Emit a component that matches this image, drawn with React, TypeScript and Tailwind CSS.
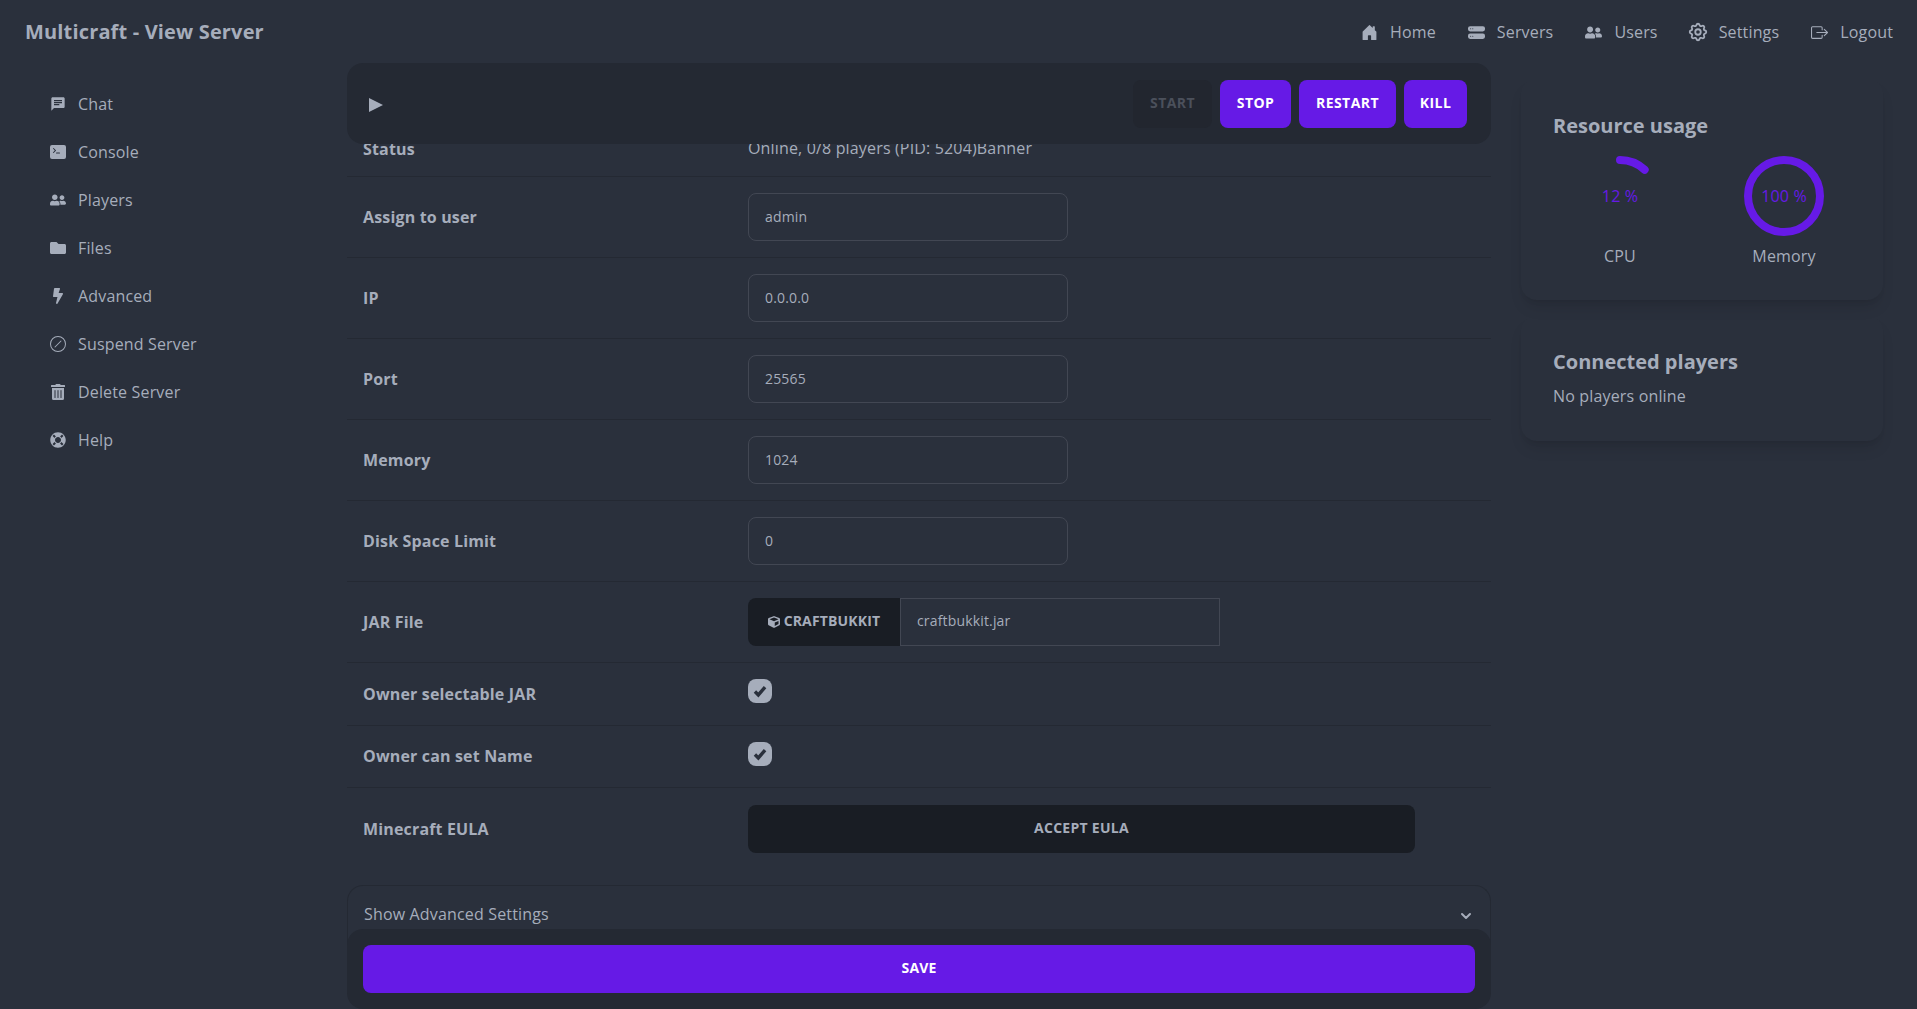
import React from "react";
import { MdChat } from "react-icons/md";
import { FaUserFriends, FaFolder, FaBolt, FaTrashAlt, FaLifeRing, FaCube } from "react-icons/fa";
import { BsTerminalFill, BsSlashCircle, BsHddStackFill, BsHouseDoorFill, BsBoxArrowRight } from "react-icons/bs";
import { HiOutlineCog } from "react-icons/hi";
import { FiChevronDown } from "react-icons/fi";

const sideLinks = [
  { label: "Chat", icon: MdChat },
  { label: "Console", icon: BsTerminalFill },
  { label: "Players", icon: FaUserFriends },
  { label: "Files", icon: FaFolder },
  { label: "Advanced", icon: FaBolt },
  { label: "Suspend Server", icon: BsSlashCircle },
  { label: "Delete Server", icon: FaTrashAlt },
  { label: "Help", icon: FaLifeRing },
];

const topLinks = [
  { label: "Home", icon: <BsHouseDoorFill size={17} /> },
  { label: "Servers", icon: <BsHddStackFill size={17} /> },
  { label: "Users", icon: <FaUserFriends size={17} /> },
  { label: "Settings", icon: <HiOutlineCog size={22} className="-mx-[2.5px]" /> },
  { label: "Logout", icon: <BsBoxArrowRight size={17} /> },
];

const fields = [
  { label: "Assign to user", value: "admin" },
  { label: "IP", value: "0.0.0.0" },
  { label: "Port", value: "25565" },
  { label: "Memory", value: "1024" },
  { label: "Disk Space Limit", value: "0" },
];

export default function App() {
  return (
    <div className="h-[1009px] w-full overflow-hidden bg-[#2a303c] text-[#a6adbb] font-['Open_Sans',sans-serif] tracking-[0.01em]">
      <header className="flex h-16 items-center justify-between pl-[25px] pr-6">
        <h1 className="text-xl font-bold">Multicraft - View Server</h1>
        <nav className="flex gap-8">
          {topLinks.map((l) => (
            <a key={l.label} className="flex items-center gap-3">
              {l.icon}
              {l.label}
            </a>
          ))}
        </nav>
      </header>

      <div className="flex">
        <aside className="w-[347px] pl-[50px] pt-4">
          {sideLinks.map((l) => (
            <a key={l.label} className="flex h-12 items-center gap-3">
              <l.icon size={16} />
              {l.label}
            </a>
          ))}
        </aside>

        <main className="-mt-px flex h-[946px] w-[1144px] flex-col">
          <div className="relative z-10 flex h-[81px] shrink-0 items-center justify-between rounded-2xl bg-[#242933] pl-[22px] pr-6">
            <svg width="14" height="14" viewBox="0 0 14 14" className="mt-[3px] fill-[#a6adbb]">
              <path d="M0 0 L14 7 L0 14 Z" />
            </svg>
            <div className="flex gap-2">
              <button className="h-12 w-[79px] rounded-lg bg-[#22262f] pb-0.5 text-sm font-bold tracking-[0.03em] text-[#4b505b]">START</button>
              <ActionButton label="STOP" width="w-[71px]" />
              <ActionButton label="RESTART" width="w-[97px]" />
              <ActionButton label="KILL" width="w-[63px]" />
            </div>
          </div>

          <div className="-mt-[23px] flex h-14 shrink-0 items-center border-b border-[#242933]">
            <Label text="Status" />
            <span className="pb-0.5 pl-4">Online, 0/8 players (PID: 5204)Banner</span>
          </div>

          {fields.map((f) => (
            <Row key={f.label} label={f.label}>
              <input
                readOnly
                defaultValue={f.value}
                className="h-12 w-80 rounded-lg border border-[#424753] bg-transparent px-4 pb-0.5 text-sm text-[#a6adbb] outline-none"
              />
            </Row>
          ))}

          <Row label="JAR File">
            <div className="flex h-12">
              <div className="flex w-[152px] items-center justify-center gap-1 rounded-l-lg bg-[#191d24] pb-0.5 text-sm font-bold">
                <FaCube size={12} className="mt-0.5" />
                CRAFTBUKKIT
              </div>
              <input
                readOnly
                defaultValue="craftbukkit.jar"
                className="w-80 border border-[#424753] bg-transparent px-4 pb-0.5 text-sm text-[#a6adbb] outline-none"
              />
            </div>
          </Row>

          <CheckRow label="Owner selectable JAR" />
          <CheckRow label="Owner can set Name" />

          <div className="flex h-[82px] shrink-0 items-center">
            <Label text="Minecraft EULA" />
            <div className="pl-4">
              <button className="h-12 w-[667px] rounded-lg bg-[#191d24] pb-0.5 text-sm font-bold tracking-[0.02em]">ACCEPT EULA</button>
            </div>
          </div>

          <div className="mt-[15px] flex h-[60px] shrink-0 items-center justify-between rounded-t-2xl border border-b-0 border-[#242933] pb-1 pl-4 pr-4">
            <span>Show Advanced Settings</span>
            <FiChevronDown size={16} strokeWidth={3} className="mt-[5px]" />
          </div>

          <div className="relative z-10 -mt-4 flex h-20 shrink-0 items-center rounded-2xl bg-[#242933] px-4">
            <button className="h-12 w-full rounded-lg bg-[#661ae6] pb-0.5 text-sm font-bold text-white">SAVE</button>
          </div>
        </main>

        <aside className="ml-[30px] flex w-[362px] flex-col gap-4 pt-[15px]">
          <section className="rounded-2xl p-8 shadow-lg">
            <h2 className="mt-px text-xl font-bold leading-7 tracking-normal">Resource usage</h2>
            <div className="mt-4 flex gap-[84px] pl-[27px]">
              <Gauge value={12} label="CPU" />
              <Gauge value={100} label="Memory" />
            </div>
          </section>
          <section className="rounded-2xl p-8 shadow-lg">
            <h2 className="text-xl font-bold leading-7 tracking-normal">Connected players</h2>
            <p className="mt-2 pb-px">No players online</p>
          </section>
        </aside>
      </div>
    </div>
  );
}

function ActionButton({ label, width }: { label: string; width: string }) {
  return <button className={`h-12 rounded-lg bg-[#661ae6] pb-0.5 text-sm font-bold tracking-[0.03em] text-white ${width}`}>{label}</button>;
}

function Label({ text }: { text: string }) {
  return <div className="w-[385px] shrink-0 pl-4 font-bold">{text}</div>;
}

function Row({ label, children }: { label: string; children: React.ReactNode }) {
  return (
    <div className="flex h-[81px] shrink-0 items-center border-b border-[#242933]">
      <Label text={label} />
      <div className="pl-4">{children}</div>
    </div>
  );
}

function CheckRow({ label }: { label: string }) {
  return (
    <div className="flex h-[62.5px] shrink-0 items-center border-b border-[#242933]">
      <Label text={label} />
      <div className="-mt-[5px] pl-4">
        <div className="flex size-6 items-center justify-center rounded-lg bg-[#a6adbb]">
          <svg width="18" height="18" viewBox="0 0 16 16" fill="none" stroke="#2a303c" strokeWidth="3">
            <path d="M3.5 8.5 L6.5 11.5 L12.5 4.5" />
          </svg>
        </div>
      </div>
    </div>
  );
}

function Gauge({ value, label }: { value: number; label: string }) {
  const c = 2 * Math.PI * 36;
  return (
    <div className="flex w-20 flex-col items-center gap-2">
      <div className="relative size-20">
        <svg width="80" height="80" viewBox="0 0 80 80" className="-rotate-90">
          <circle
            cx="40"
            cy="40"
            r="36"
            fill="none"
            stroke="#661ae6"
            strokeWidth="8"
            strokeLinecap="round"
            strokeDasharray={`${(c * value) / 100} ${c}`}
          />
        </svg>
        <span className="absolute inset-0 flex items-center justify-center text-[#661ae6]">{value} %</span>
      </div>
      <span className="whitespace-nowrap">{label}</span>
    </div>
  );
}
